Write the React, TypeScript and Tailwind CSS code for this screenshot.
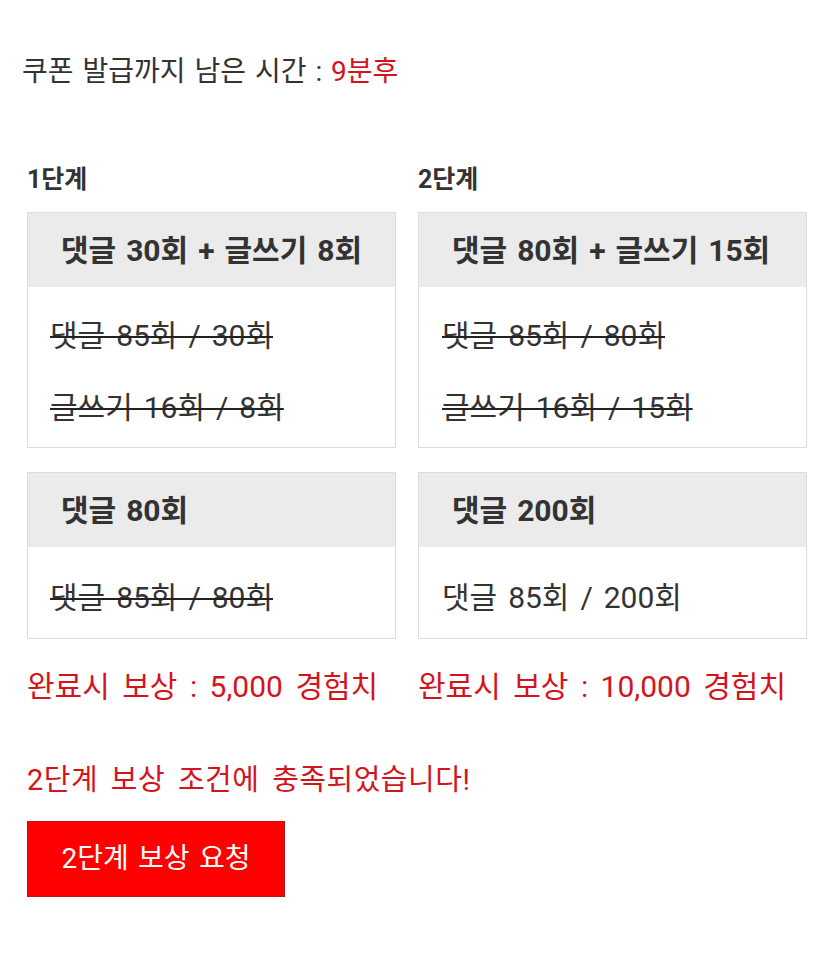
import React from "react";

const font = { fontFamily: 'Roboto, "Noto Sans CJK KR", "Noto Sans", sans-serif' };

function Box({
  title,
  lines,
  strike,
  bodyClass,
}: {
  title: string;
  lines: string[];
  strike: boolean;
  bodyClass: string;
}) {
  return (
    <div className="border border-[#dcdcdc] bg-white">
      <div className="h-[74px] bg-[#ebebeb] flex items-center pl-[33px] text-[30px] font-bold text-[#333] whitespace-nowrap [word-spacing:2.5px]">
        {title}
      </div>
      <div className={bodyClass}>
        {lines.map((l) => (
          <div
            key={l}
            className="h-[72px] flex items-center text-[30px] text-[#333] whitespace-nowrap [word-spacing:3.5px]"
          >
            <span className={strike ? "line-through decoration-[#222] decoration-2" : ""}>{l}</span>
          </div>
        ))}
      </div>
    </div>
  );
}

export default function App() {
  return (
    <div className="w-[835px] h-[965px] bg-white" style={font}>
      <div className="pl-[22px] pt-[52px] text-[28px] text-[#333] leading-[40px] whitespace-nowrap [word-spacing:2px]">
        쿠폰 발급까지 남은 시간 : <span className="text-[#d4141c]">9분후</span>
      </div>
      <div className="pl-[27px] mt-[68px] grid grid-cols-[369px_389px] gap-x-[22px]">
        <div className="text-[25px] font-bold text-[#333] leading-[40px] h-[40px] mb-[12px]">1단계</div>
        <div className="text-[25px] font-bold text-[#333] leading-[40px] h-[40px] mb-[12px]">2단계</div>
        <Box
          title="댓글 30회 + 글쓰기 8회"
          lines={["댓글 85회 / 30회", "글쓰기 16회 / 8회"]}
          strike
          bodyClass="pl-[22px] pt-[12px] pb-[4px]"
        />
        <Box
          title="댓글 80회 + 글쓰기 15회"
          lines={["댓글 85회 / 80회", "글쓰기 16회 / 15회"]}
          strike
          bodyClass="pl-[23px] pt-[12px] pb-[4px]"
        />
        <div className="mt-[24px]">
          <Box
            title="댓글 80회"
            lines={["댓글 85회 / 80회"]}
            strike
            bodyClass="pl-[22px] pt-[14px] pb-[5px]"
          />
        </div>
        <div className="mt-[24px]">
          <Box
            title="댓글 200회"
            lines={["댓글 85회 / 200회"]}
            strike={false}
            bodyClass="pl-[23px] pt-[14px] pb-[5px]"
          />
        </div>
        <div className="mt-[28px] text-[30px] text-[#d4141c] leading-[40px] whitespace-nowrap [word-spacing:5px]">
          완료시 보상 : 5,000 경험치
        </div>
        <div className="mt-[28px] text-[30px] text-[#d4141c] leading-[40px] whitespace-nowrap [word-spacing:5px]">
          완료시 보상 : 10,000 경험치
        </div>
      </div>
      <div className="pl-[27px] mt-[53px] text-[29px] text-[#d4141c] leading-[40px] whitespace-nowrap tracking-[0.5px] [word-spacing:5px]">
        2단계 보상 조건에 충족되었습니다!
      </div>
      <div className="pl-[27px] mt-[21px]">
        <button className="w-[258px] h-[76px] bg-[#ff0000] border border-[#b81818] text-white text-[28px] flex items-center justify-center [word-spacing:2.5px]">
          2단계 보상 요청
        </button>
      </div>
    </div>
  );
}
